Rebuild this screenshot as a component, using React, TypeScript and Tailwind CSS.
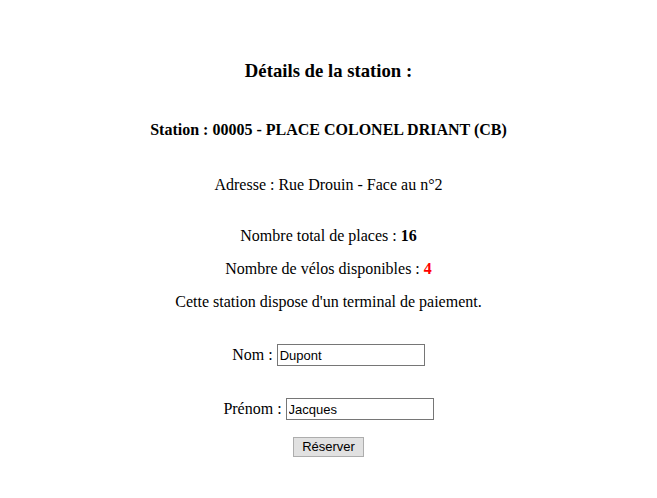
import React from "react";

export default function App() {
  const serif = { fontFamily: '"Liberation Serif", "Times New Roman", serif' };
  return (
    <div
      className="w-[657px] h-[498px] bg-white text-black flex flex-col items-center pt-[60px]"
      style={serif}
    >
      <div className="text-[18.72px] leading-[22px] font-bold">Détails de la station :</div>
      <div className="mt-[39px] text-[16px] leading-[18px] font-bold">
        Station : 00005 - PLACE COLONEL DRIANT (CB)
      </div>
      <div className="mt-[37px] text-[16px] leading-[18px]">Adresse : Rue Drouin - Face au n°2</div>
      <div className="mt-[33px] text-[16px] leading-[18px]">
        Nombre total de places : <span className="font-bold">16</span>
      </div>
      <div className="mt-[15px] text-[16px] leading-[18px]">
        Nombre de vélos disponibles : <span className="font-bold text-[#ff0000]">4</span>
      </div>
      <div className="mt-[15px] text-[16px] leading-[18px]">
        Cette station dispose d'un terminal de paiement.
      </div>
      <div className="mt-[33px] flex items-center text-[16px] leading-[18px] h-[22px]">
        <span>Nom :&nbsp;</span>
        <input
          defaultValue="Dupont"
          className="w-[148px] h-[22px] border border-[#767676] px-[2px] text-[13px] text-black outline-none"
          style={{ fontFamily: '"Liberation Sans", Arial, sans-serif' }}
        />
      </div>
      <div className="mt-[32px] flex items-center text-[16px] leading-[18px] h-[22px]">
        <span>Prénom :&nbsp;</span>
        <input
          defaultValue="Jacques"
          className="w-[148px] h-[22px] border border-[#767676] px-[2px] text-[13px] text-black outline-none"
          style={{ fontFamily: '"Liberation Sans", Arial, sans-serif' }}
        />
      </div>
      <button
        className="mt-[17px] w-[71px] h-[20px] bg-[#e1e1e1] border border-[#adadad] text-[13px] leading-[18px] text-black"
        style={{ fontFamily: '"Liberation Sans", Arial, sans-serif' }}
      >
        Réserver
      </button>
    </div>
  );
}
